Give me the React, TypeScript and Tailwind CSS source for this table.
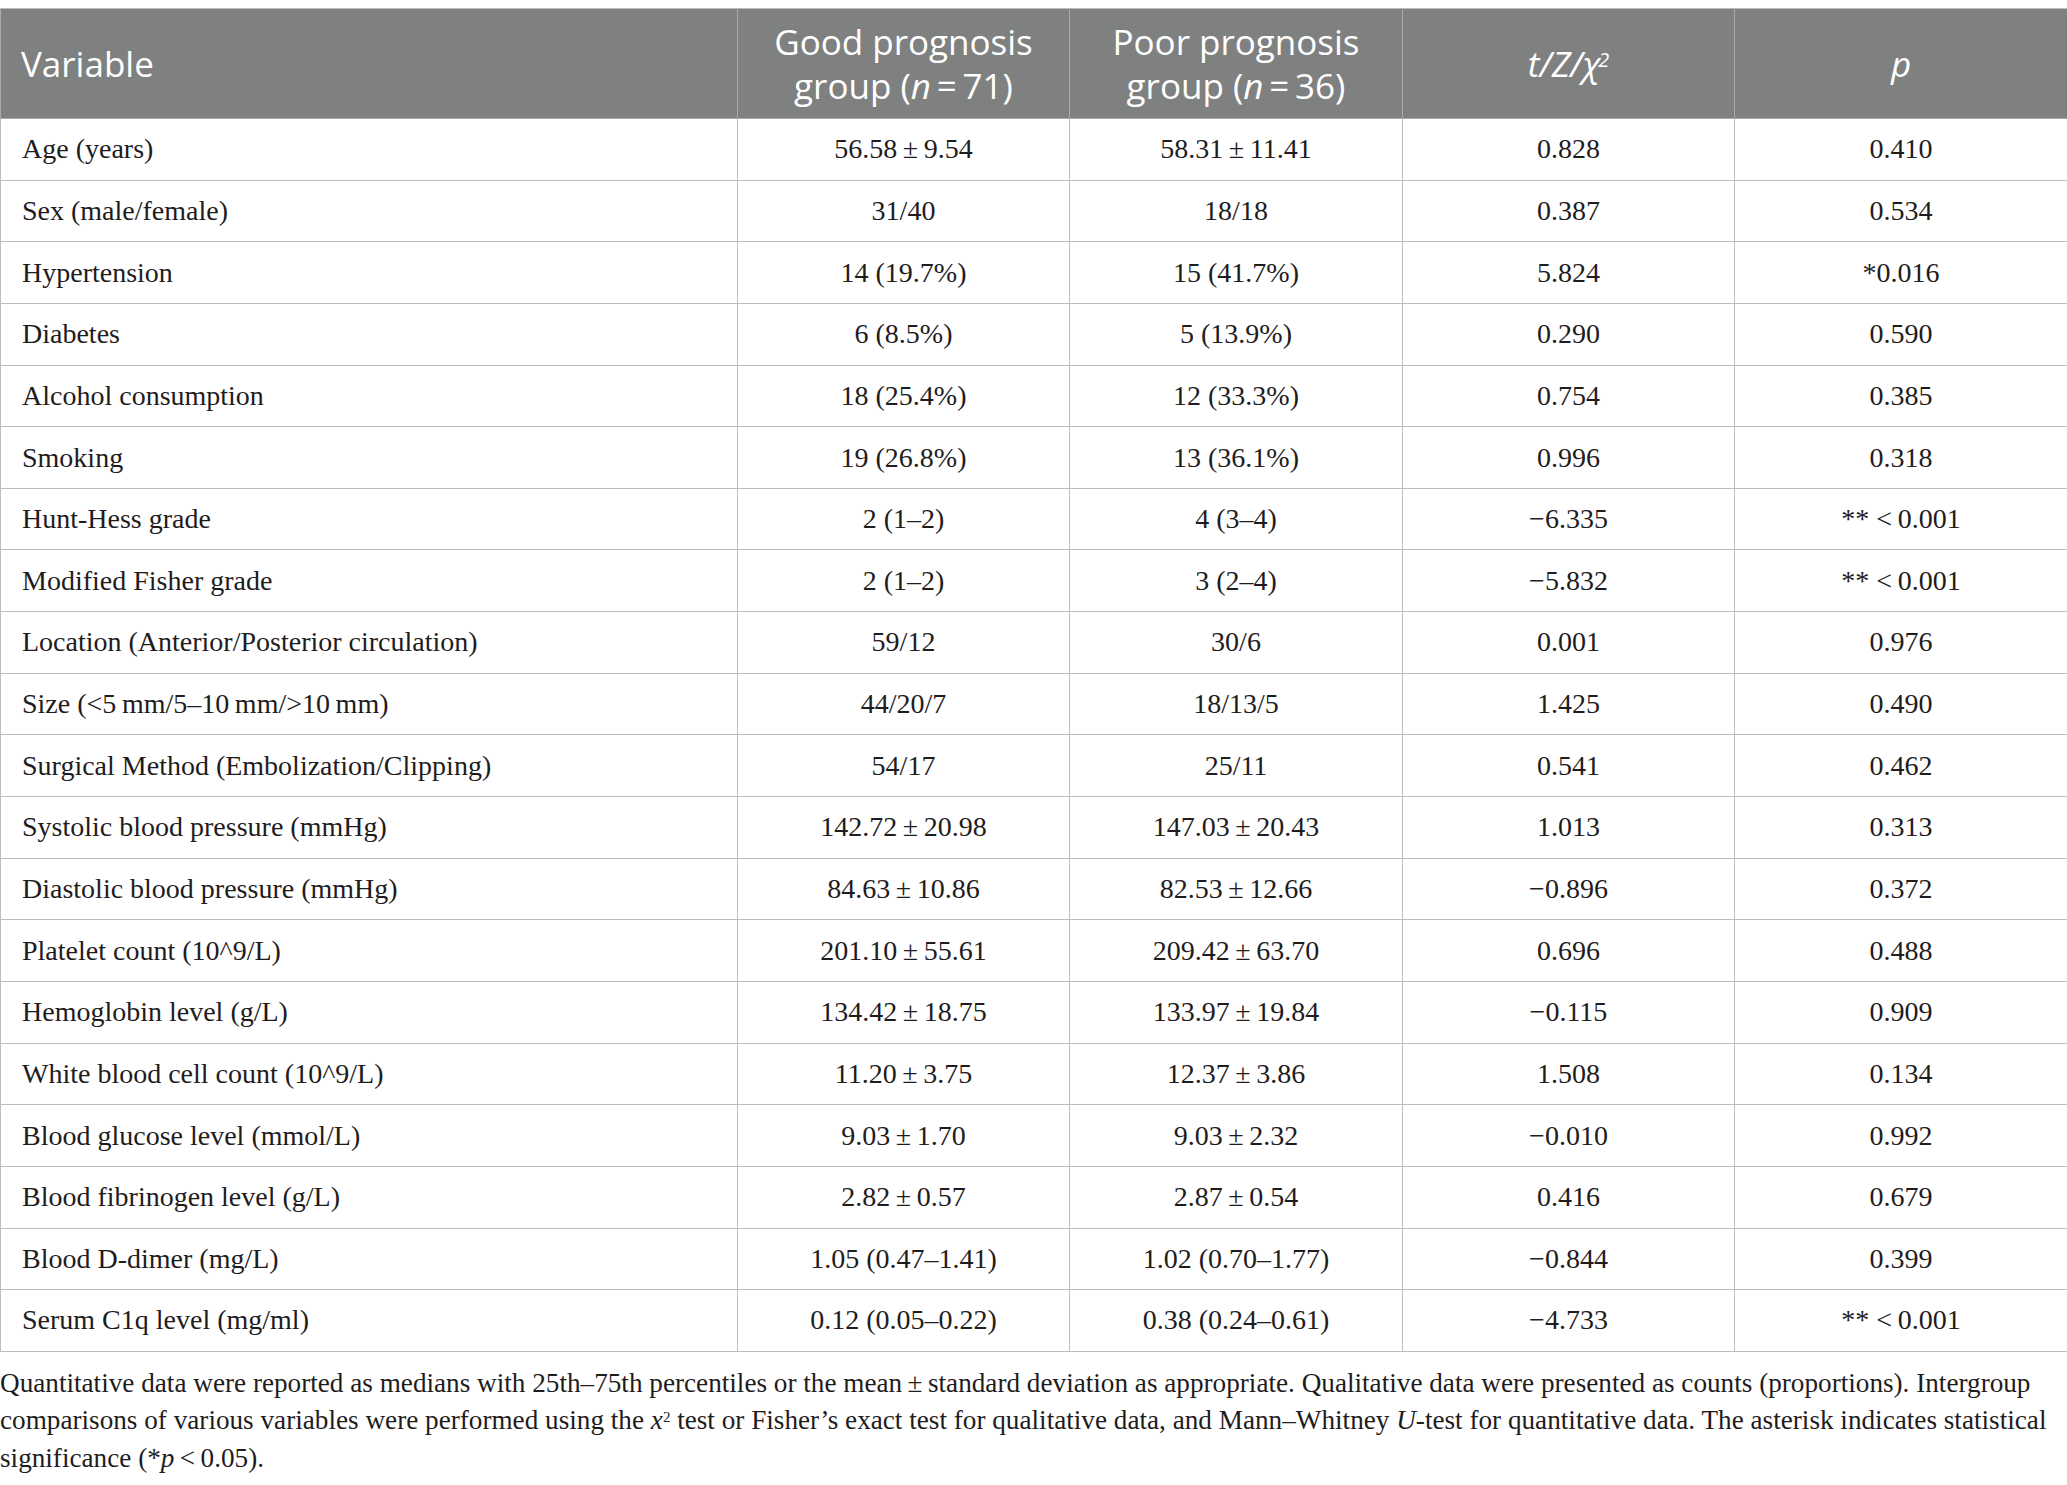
import React from "react";

const rows: [string, string, string, string, string][] = [
  ["Age (years)", "56.58\u2009±\u20099.54", "58.31\u2009±\u200911.41", "0.828", "0.410"],
  ["Sex (male/female)", "31/40", "18/18", "0.387", "0.534"],
  ["Hypertension", "14 (19.7%)", "15 (41.7%)", "5.824", "*0.016"],
  ["Diabetes", "6 (8.5%)", "5 (13.9%)", "0.290", "0.590"],
  ["Alcohol consumption", "18 (25.4%)", "12 (33.3%)", "0.754", "0.385"],
  ["Smoking", "19 (26.8%)", "13 (36.1%)", "0.996", "0.318"],
  ["Hunt-Hess grade", "2 (1–2)", "4 (3–4)", "−6.335", "** <\u20090.001"],
  ["Modified Fisher grade", "2 (1–2)", "3 (2–4)", "−5.832", "** <\u20090.001"],
  ["Location (Anterior/Posterior circulation)", "59/12", "30/6", "0.001", "0.976"],
  ["Size (<5\u2009mm/5–10\u2009mm/>10\u2009mm)", "44/20/7", "18/13/5", "1.425", "0.490"],
  ["Surgical Method (Embolization/Clipping)", "54/17", "25/11", "0.541", "0.462"],
  ["Systolic blood pressure (mmHg)", "142.72\u2009±\u200920.98", "147.03\u2009±\u200920.43", "1.013", "0.313"],
  ["Diastolic blood pressure (mmHg)", "84.63\u2009±\u200910.86", "82.53\u2009±\u200912.66", "−0.896", "0.372"],
  ["Platelet count (10^9/L)", "201.10\u2009±\u200955.61", "209.42\u2009±\u200963.70", "0.696", "0.488"],
  ["Hemoglobin level (g/L)", "134.42\u2009±\u200918.75", "133.97\u2009±\u200919.84", "−0.115", "0.909"],
  ["White blood cell count (10^9/L)", "11.20\u2009±\u20093.75", "12.37\u2009±\u20093.86", "1.508", "0.134"],
  ["Blood glucose level (mmol/L)", "9.03\u2009±\u20091.70", "9.03\u2009±\u20092.32", "−0.010", "0.992"],
  ["Blood fibrinogen level (g/L)", "2.82\u2009±\u20090.57", "2.87\u2009±\u20090.54", "0.416", "0.679"],
  ["Blood D-dimer (mg/L)", "1.05 (0.47–1.41)", "1.02 (0.70–1.77)", "−0.844", "0.399"],
  ["Serum C1q level (mg/ml)", "0.12 (0.05–0.22)", "0.38 (0.24–0.61)", "−4.733", "** <\u20090.001"],
];

const serif = { fontFamily: '"Liberation Serif", "Times New Roman", serif' };
const sans = { fontFamily: '"Open Sans", "Noto Sans", sans-serif' };

export default function App() {
  return (
    <div className="bg-white w-[2067px] pt-[8px] text-[#1f1c1d]" style={serif}>
      <table className="table-fixed border-collapse w-[2067px]">
        <colgroup>
          <col className="w-[737px]" />
          <col className="w-[332px]" />
          <col className="w-[333px]" />
          <col className="w-[332px]" />
          <col className="w-[333px]" />
        </colgroup>
        <thead>
          <tr className="h-[110px] bg-[#7f8080] text-white text-[35px] leading-[44px]" style={sans}>
            <th className="border border-[#a9a9a9] border-t-[#bdbdbd] text-left font-normal pl-[20px]">Variable</th>
            <th className="border border-[#a9a9a9] border-t-[#bdbdbd] font-normal">
              Good prognosis
              <br />
              group (<i>n</i>&thinsp;=&thinsp;71)
            </th>
            <th className="border border-[#a9a9a9] border-t-[#bdbdbd] font-normal">
              Poor prognosis
              <br />
              group (<i>n</i>&thinsp;=&thinsp;36)
            </th>
            <th className="border border-[#a9a9a9] border-t-[#bdbdbd] font-normal">
              <i>
                t/Z/χ<sup className="text-[20px] -ml-[2px]">2</sup>
              </i>
            </th>
            <th className="border border-[#a9a9a9] border-t-[#bdbdbd] font-normal">
              <i>p</i>
            </th>
          </tr>
        </thead>
        <tbody className="text-[28px]">
          {rows.map((r, i) => (
            <tr key={i} className="h-[61.65px]">
              <td className="border border-[#bdbdbd] pl-[21px] text-left">{r[0]}</td>
              <td className="border border-[#bdbdbd] text-center">{r[1]}</td>
              <td className="border border-[#bdbdbd] text-center">{r[2]}</td>
              <td className="border border-[#bdbdbd] text-center">{r[3]}</td>
              <td className="border border-[#bdbdbd] text-center">{r[4]}</td>
            </tr>
          ))}
        </tbody>
      </table>
      <p className="text-[27.2px] leading-[37.5px] mt-[13px] whitespace-nowrap">
        Quantitative data were reported as medians with 25th–75th percentiles or the mean&thinsp;±&thinsp;standard deviation as appropriate. Qualitative data were presented as counts (proportions). Intergroup
        <br />
        comparisons of various variables were performed using the <i>x</i>
        <sup className="text-[15px]">2</sup> test or Fisher’s exact test for qualitative data, and Mann–Whitney <i>U</i>-test for quantitative data. The asterisk indicates statistical
        <br />
        significance (*<i>p</i>&thinsp;&lt;&thinsp;0.05).
      </p>
    </div>
  );
}
